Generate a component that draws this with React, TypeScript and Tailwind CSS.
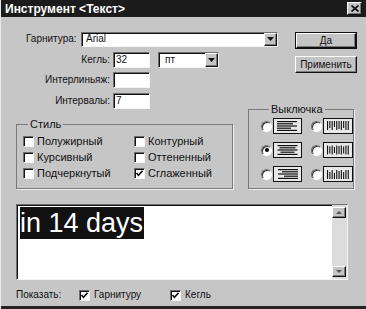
import React from "react";

/* ================= Win9x bevel helpers ================= */

const sunken =
  "bg-white border border-t-[#6e6e6e] border-l-[#6e6e6e] border-b-[#f4f4f4] border-r-[#f4f4f4] shadow-[inset_1px_1px_0_#111]";
const raised =
  "bg-[#c4c4c4] border border-t-white border-l-white border-b-[#111] border-r-[#111] shadow-[inset_-1px_-1px_0_#7a7a7a]";

const Arrow = () => (
  <div className={`w-[13px] h-full flex items-center justify-center ${raised}`}>
    <svg width="7" height="4" viewBox="0 0 7 4">
      <path d="M0 0h7L3.5 4z" fill="#111" />
    </svg>
  </div>
);

const Check = ({ checked = false }: { checked?: boolean }) => (
  <div className={`w-[11px] h-[11px] flex items-center justify-center ${sunken}`}>
    {checked && (
      <svg width="7" height="7" viewBox="0 0 7 7">
        <path d="M0.5 3l2 2.2L6.5 0.8" stroke="#111" strokeWidth="1.6" fill="none" />
      </svg>
    )}
  </div>
);

const Radio = ({ on = false }: { on?: boolean }) => (
  <div className="w-[11px] h-[11px] rounded-full bg-white border border-t-[#6e6e6e] border-l-[#6e6e6e] border-b-white border-r-white shadow-[inset_1px_1px_0_#333] flex items-center justify-center">
    {on && <div className="w-[4px] h-[4px] rounded-full bg-black" />}
  </div>
);

/* horizontal lines: left / center / right */
const HAlign = ({ mode }: { mode: "l" | "c" | "r" }) => {
  const widths = [20, 16, 20, 14, 20];
  return (
    <svg width="29" height="16" viewBox="0 0 29 16">
      <rect x="0.5" y="0.5" width="28" height="15" fill="#e8e8e8" stroke="#111" />
      {widths.map((w, i) => {
        const x = mode === "l" ? 4 : mode === "r" ? 25 - w : 14.5 - w / 2;
        return <rect key={i} x={x} y={3 + i * 2.2} width={w} height="1.2" fill="#111" />;
      })}
    </svg>
  );
};

/* vertical lines: top / center / bottom */
const VAlign = ({ mode }: { mode: "t" | "c" | "b" }) => {
  const heights = [9, 7, 9, 6, 9, 8, 9, 7, 9, 9];
  return (
    <svg width="30" height="16" viewBox="0 0 30 16">
      <rect x="0.5" y="0.5" width="29" height="15" fill="#e8e8e8" stroke="#111" />
      {heights.map((h, i) => {
        const y = mode === "t" ? 3 : mode === "b" ? 13 - h : 8 - h / 2;
        return <rect key={i} x={4 + i * 2.3} y={y} width="1.1" height={h} fill="#111" />;
      })}
    </svg>
  );
};

const StyleItem = ({ label, checked = false }: { label: string; checked?: boolean }) => (
  <div className="flex items-center gap-[3px] h-[15px]">
    <Check checked={checked} />
    <span>{label}</span>
  </div>
);

export default function App() {
  return (
    <div
      className="w-[366px] h-[309px] bg-[#c6c6c6] flex flex-col overflow-hidden text-[11px] text-[#111] leading-none border-l border-l-[#e8e8e8]"
      style={{ fontFamily: '"Liberation Sans", Arial, sans-serif' }}
    >
      {/* Title bar */}
      <div className="h-[17px] bg-[#1c1c1c] flex items-center justify-between pl-[4px] pr-[4px] shrink-0">
        <span className="text-white font-bold text-[12px]">Инструмент &lt;Текст&gt;</span>
        <div className={`w-[15px] h-[13px] flex items-center justify-center ${raised}`}>
          <svg width="8" height="7" viewBox="0 0 8 7">
            <path d="M0.5 0.5l7 6M7.5 0.5l-7 6" stroke="#111" strokeWidth="1.7" />
          </svg>
        </div>
      </div>

      {/* Top fields + buttons */}
      <div className="flex pt-[15px] text-[10px]">
        <div className="w-[294px] flex flex-col">
          <div className="flex items-center h-[14px]">
            <span className="w-[80px] pl-[25px]">Гарнитура:</span>
            <div className={`w-[197px] h-[15px] flex items-center ${sunken}`}>
              <span className="pl-[4px] flex-1">Arial</span>
              <Arrow />
            </div>
          </div>
          <div className="flex items-center h-[16px] mt-[6px]">
            <span className="w-[112px] text-right pr-[3px]">Кегль:</span>
            <div className={`w-[37px] h-[16px] flex items-center pl-[2px] ${sunken}`}>32</div>
            <div className={`ml-[8px] w-[61px] h-[16px] flex items-center ${sunken}`}>
              <span className="pl-[6px] flex-1">пт</span>
              <Arrow />
            </div>
          </div>
          <div className="flex items-center h-[16px] mt-[4px]">
            <span className="w-[112px] text-right pr-[3px]">Интерлиньяж:</span>
            <div className={`w-[37px] h-[16px] ${sunken}`} />
          </div>
          <div className="flex items-center h-[16px] mt-[5px]">
            <span className="w-[112px] text-right pr-[3px]">Интервалы:</span>
            <div className={`w-[37px] h-[16px] flex items-center pl-[2px] ${sunken}`}>7</div>
          </div>
        </div>
        <div className="flex flex-col gap-[7px]">
          <div className="w-[62px] h-[17px] border border-[#111]">
            <div className={`w-full h-full flex items-center justify-center ${raised}`}>Да</div>
          </div>
          <div className={`w-[62px] h-[17px] flex items-center justify-center ${raised}`}>Применить</div>
        </div>
      </div>

      {/* Groups */}
      <div className="flex items-end pl-[15px] mt-[-5px]">
        <fieldset className="w-[217px] h-[70px] border border-[#7a7a7a] shadow-[1px_1px_0_#f0f0f0] pl-[6px] pt-[4px]">
          <legend className="ml-[5px] px-[2px] text-[11px]">Стиль</legend>
          <div className="grid grid-cols-[111px_1fr] gap-y-[1px]">
            <StyleItem label="Полужирный" />
            <StyleItem label="Контурный" />
            <StyleItem label="Курсивный" />
            <StyleItem label="Оттененный" />
            <StyleItem label="Подчеркнутый" />
            <StyleItem label="Сглаженный" checked />
          </div>
        </fieldset>
        <fieldset className="ml-[15px] w-[104px] h-[85px] border border-[#7a7a7a] shadow-[1px_1px_0_#f0f0f0] pl-[12px] pt-[3px]">
          <legend className="ml-[8px] px-[2px] text-[11px]">Выключка</legend>
          <div className="grid grid-cols-[50px_1fr] gap-y-[8px] items-center">
            <div className="flex items-center gap-[1px]"><Radio /><HAlign mode="l" /></div>
            <div className="flex items-center gap-[1px]"><Radio /><VAlign mode="t" /></div>
            <div className="flex items-center gap-[1px]"><Radio on /><HAlign mode="c" /></div>
            <div className="flex items-center gap-[1px]"><Radio /><VAlign mode="c" /></div>
            <div className="flex items-center gap-[1px]"><Radio /><HAlign mode="r" /></div>
            <div className="flex items-center gap-[1px]"><Radio /><VAlign mode="b" /></div>
          </div>
        </fieldset>
      </div>

      {/* Text area */}
      <div className="ml-[15px] mt-[15px] w-[332px] h-[76px] flex bg-white border border-t-[#6e6e6e] border-l-[#6e6e6e] border-b-[#f4f4f4] border-r-[#f4f4f4] shadow-[inset_1px_1px_0_#111]">
        <div className="flex-1 pl-[3px] pt-[2px]">
          <span className="inline-block bg-[#111] text-white text-[27px] leading-[32px] pr-[1px]">in 14 days</span>
        </div>
        <div className="w-[15px] flex flex-col justify-between bg-[#dcdcdc] py-[2px] pr-[1px]">
          <div className={`w-[14px] h-[11px] flex items-center justify-center ${raised}`}>
            <svg width="6" height="3" viewBox="0 0 6 3"><path d="M0 3h6L3 0z" fill="#555" /></svg>
          </div>
          <div className={`w-[14px] h-[11px] flex items-center justify-center ${raised}`}>
            <svg width="6" height="3" viewBox="0 0 6 3"><path d="M0 0h6L3 3z" fill="#555" /></svg>
          </div>
        </div>
      </div>

      {/* Show options */}
      <div className="flex items-center pl-[15px] mt-[8px] h-[14px] text-[10px]">
        <span className="w-[63px]">Показать:</span>
        <Check checked />
        <span className="ml-[4px] w-[76px]">Гарнитуру</span>
        <Check checked />
        <span className="ml-[4px]">Кегль</span>
      </div>

      <div className="mt-auto h-[3px] bg-[#222]" />
    </div>
  );
}
